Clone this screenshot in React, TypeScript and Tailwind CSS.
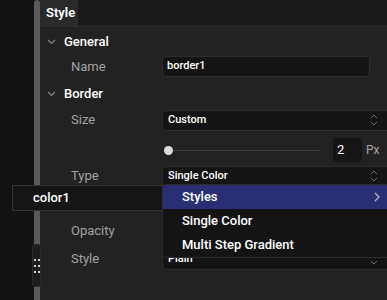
import React from "react";

const Chevron = () => (
  <svg width="9" height="6" viewBox="0 0 9 6" className="shrink-0">
    <path d="M1 1 L4.5 4.5 L8 1" fill="none" stroke="#8a8a8a" strokeWidth="1.2" />
  </svg>
);

const UpDown = () => (
  <svg width="8" height="12" viewBox="0 0 8 12" className="shrink-0">
    <path d="M1 4 L4 1 L7 4" fill="none" stroke="#6a6a6a" strokeWidth="1" />
    <path d="M1 8 L4 11 L7 8" fill="none" stroke="#6a6a6a" strokeWidth="1" />
  </svg>
);

const Label = ({ children }: { children: React.ReactNode }) => (
  <div className="w-[122px] pl-[31px] text-[13px] text-[#a3a3a3] shrink-0">{children}</div>
);

export default function App() {
  return (
    <div
      className="relative w-[387px] h-[300px] overflow-hidden flex bg-[#121212]"
      style={{ fontFamily: "Roboto, 'Liberation Sans', sans-serif" }}
    >
      <div className="w-[34px] shrink-0" />
      <div className="w-[6px] shrink-0 bg-[#5a5a5a] rounded-t-[3px]" />
      <div className="flex-1 min-w-0 bg-[#222222] flex flex-col">
        <div className="h-[27px] bg-[#1b1b1b] border-b border-[#2c2c2c] flex">
          <div className="w-[38px] bg-[#2a2a2a] flex items-center pl-[6px] text-[13px] font-semibold text-white">
            Style
          </div>
        </div>
        <div className="h-[24px] mt-[3px] flex items-center pl-[7px] gap-[8px]">
          <Chevron />
          <span className="text-[13px] font-medium text-white">General</span>
        </div>
        <div className="h-[21px] mt-[2px] flex items-center">
          <Label>Name</Label>
          <div className="w-[208px] shrink-0 h-[21px] bg-[#141414] border border-[#2e2e2e] rounded-[4px] flex items-center pl-[4px] text-[11px] font-medium text-white">
            border1
          </div>
        </div>
        <div className="h-[24px] mt-[5px] flex items-center pl-[7px] gap-[8px]">
          <Chevron />
          <span className="text-[13px] font-medium text-white">Border</span>
        </div>
        <div className="h-[20px] mt-[4px] flex items-center">
          <Label>Size</Label>
          <div className="w-[234px] shrink-0 h-[21px] bg-[#141414] border border-[#2e2e2e] rounded-[4px] flex items-center justify-between pl-[5px] pr-[17px] text-[11px] font-medium text-white">
            <span>Custom</span>
            <UpDown />
          </div>
        </div>
        <div className="h-[24px] mt-[8px] flex items-center">
          <div className="w-[122px] shrink-0" />
          <div className="w-[160px] shrink-0 flex items-center">
            <div className="w-[9px] h-[9px] rounded-full bg-[#dcdcdc] ml-[2px] shrink-0" />
            <div className="h-px bg-[#3e3e3e] w-[148px]" />
          </div>
          <div className="ml-[11px] w-[29px] shrink-0 h-[24px] bg-[#151515] rounded-[4px] flex items-center pl-[4px] text-[13px] text-white">
            2
          </div>
          <span className="ml-[4px] text-[12px] text-[#a8a8a8]">Px</span>
        </div>
        <div className="h-[20px] mt-[4px] flex items-center">
          <Label>Type</Label>
          <div className="w-[234px] shrink-0 h-[21px] bg-[#141414] border border-[#2e2e2e] rounded-[4px] flex items-center justify-between pl-[5px] pr-[17px] text-[11px] font-medium text-white">
            <span>Single Color</span>
            <UpDown />
          </div>
        </div>
        <div className="h-[20px] mt-[35px] flex items-center">
          <Label>Opacity</Label>
        </div>
        <div className="h-[20px] mt-[8px] flex items-center">
          <Label>Style</Label>
          <div className="w-[234px] shrink-0 h-[21px] bg-[#141414] border border-[#2e2e2e] rounded-[4px] flex items-center justify-between pl-[5px] pr-[17px] text-[11px] font-medium text-white">
            <span>Plain</span>
            <UpDown />
          </div>
        </div>
      </div>

      {/* drag handle */}
      <div className="absolute left-[32px] top-[244px] w-[9px] h-[43px] bg-[#1d1d1d] border border-[#2a2a2a] rounded-[3px] flex flex-col items-center justify-center gap-[4px]">
        <div className="flex gap-[2px]"><div className="w-[2px] h-[2px] bg-[#d0d0d0]" /><div className="w-[2px] h-[2px] bg-[#d0d0d0]" /></div>
        <div className="flex gap-[2px]"><div className="w-[2px] h-[2px] bg-[#d0d0d0]" /><div className="w-[2px] h-[2px] bg-[#d0d0d0]" /></div>
        <div className="flex gap-[2px]"><div className="w-[2px] h-[2px] bg-[#d0d0d0]" /><div className="w-[2px] h-[2px] bg-[#d0d0d0]" /></div>
      </div>

      {/* color1 popup */}
      <div className="absolute left-[12px] top-[185px] w-[151px] h-[26px] bg-[#151515] border border-[#333333] flex items-center pl-[20px] text-[13px] font-medium text-white">
        color1
      </div>

      {/* dropdown menu */}
      <div className="absolute left-[162px] top-[184px] w-[240px] h-[74px] bg-[#141414] border border-[#2e2e2e] rounded-[4px] flex flex-col text-[13px] font-medium text-white overflow-hidden">
        <div className="h-[24px] bg-[#292f72] flex items-center justify-between pl-[19px] pr-[21px]">
          <span>Styles</span>
          <svg width="6" height="10" viewBox="0 0 6 10">
            <path d="M1 1 L5 5 L1 9" fill="none" stroke="#b8b8c8" strokeWidth="1.2" />
          </svg>
        </div>
        <div className="h-[24px] flex items-center pl-[19px]">Single Color</div>
        <div className="h-[24px] flex items-center pl-[19px]">Multi Step Gradient</div>
      </div>
    </div>
  );
}
